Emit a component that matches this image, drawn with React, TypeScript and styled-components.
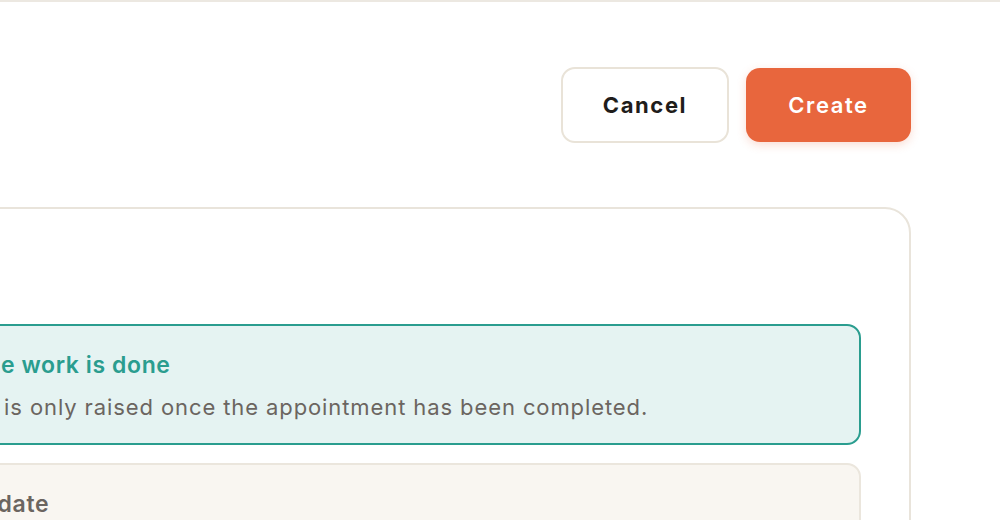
import React from 'react';
import styled, { createGlobalStyle } from 'styled-components';

const GlobalStyle = createGlobalStyle`
  html, body {
    margin: 0;
    padding: 0;
    background: #ffffff;
    overflow: hidden;
  }
  body {
    font-family: Inter, "Noto Sans", "Liberation Sans", sans-serif;
    color: #1f1d1b;
  }
`;

const Viewport = styled.div`
  width: 1000px;
  height: 520px;
  overflow: hidden;
  border-top: 2px solid #ece8e1;
  box-sizing: border-box;
`;

// the form is wider than the window, its left part lies outside the shot
const Page = styled.div`
  margin-left: -209px;
  padding-right: 89px;
  display: flex;
  flex-direction: column;
`;

const Header = styled.div`
  display: flex;
  justify-content: flex-end;
  align-items: center;
  gap: 17px;
  margin-top: 65px;
`;

const Button = styled.button<{ $primary?: boolean }>`
  font-family: inherit;
  font-size: 22px;
  font-weight: ${(p) => (p.$primary ? 600 : 700)};
  letter-spacing: 1.6px;
  height: ${(p) => (p.$primary ? '74px' : '76px')};
  width: ${(p) => (p.$primary ? '165px' : '168px')};
  border-radius: 14px;
  border: ${(p) => (p.$primary ? 'none' : '2px solid #e9e3d8')};
  background: ${(p) => (p.$primary ? '#e8663d' : '#ffffff')};
  color: ${(p) => (p.$primary ? '#ffffff' : '#1f1d1b')};
  box-shadow: ${(p) => (p.$primary ? '0 3px 10px rgba(232, 102, 61, 0.22)' : 'none')};
  cursor: pointer;
`;

const Card = styled.section`
  margin-top: 64px;
  border: 2px solid #e9e4db;
  border-radius: 26px;
  padding: 115px 48px 40px 48px;
  display: flex;
  flex-direction: column;
  gap: 18px;
`;

const Notice = styled.div<{ $tone: 'teal' | 'sand' }>`
  border: 2px solid ${(p) => (p.$tone === 'teal' ? '#2a9d8f' : '#ebe6dd')};
  background: ${(p) => (p.$tone === 'teal' ? '#e5f3f2' : '#f9f6f1')};
  border-radius: 14px;
  padding: 24px 24px 21px 24px;
  display: flex;
  flex-direction: column;
  gap: 12px;
`;

const NoticeTitle = styled.div<{ $tone: 'teal' | 'sand' }>`
  font-size: 23px;
  line-height: 30px;
  font-weight: 600;
  letter-spacing: 0.6px;
  color: ${(p) => (p.$tone === 'teal' ? '#2a9d8f' : '#6b6560')};
`;

const NoticeText = styled.div`
  font-size: 22px;
  line-height: 30px;
  letter-spacing: 0.9px;
  color: #6b6560;
`;

export default function App() {
  return (
    <>
      <GlobalStyle />
      <Viewport>
        <Page>
          <Header>
            <Button>Cancel</Button>
            <Button $primary>Create</Button>
          </Header>
          <Card>
            <Notice $tone="teal">
              <NoticeTitle $tone="teal">Pay after the work is done</NoticeTitle>
              <NoticeText>
                The invoice is only raised once the appointment has been completed.
              </NoticeText>
            </Notice>
            <Notice $tone="sand">
              <NoticeTitle $tone="sand">Requested date</NoticeTitle>
              <NoticeText>Choose when the appointment should take place.</NoticeText>
            </Notice>
          </Card>
        </Page>
      </Viewport>
    </>
  );
}
